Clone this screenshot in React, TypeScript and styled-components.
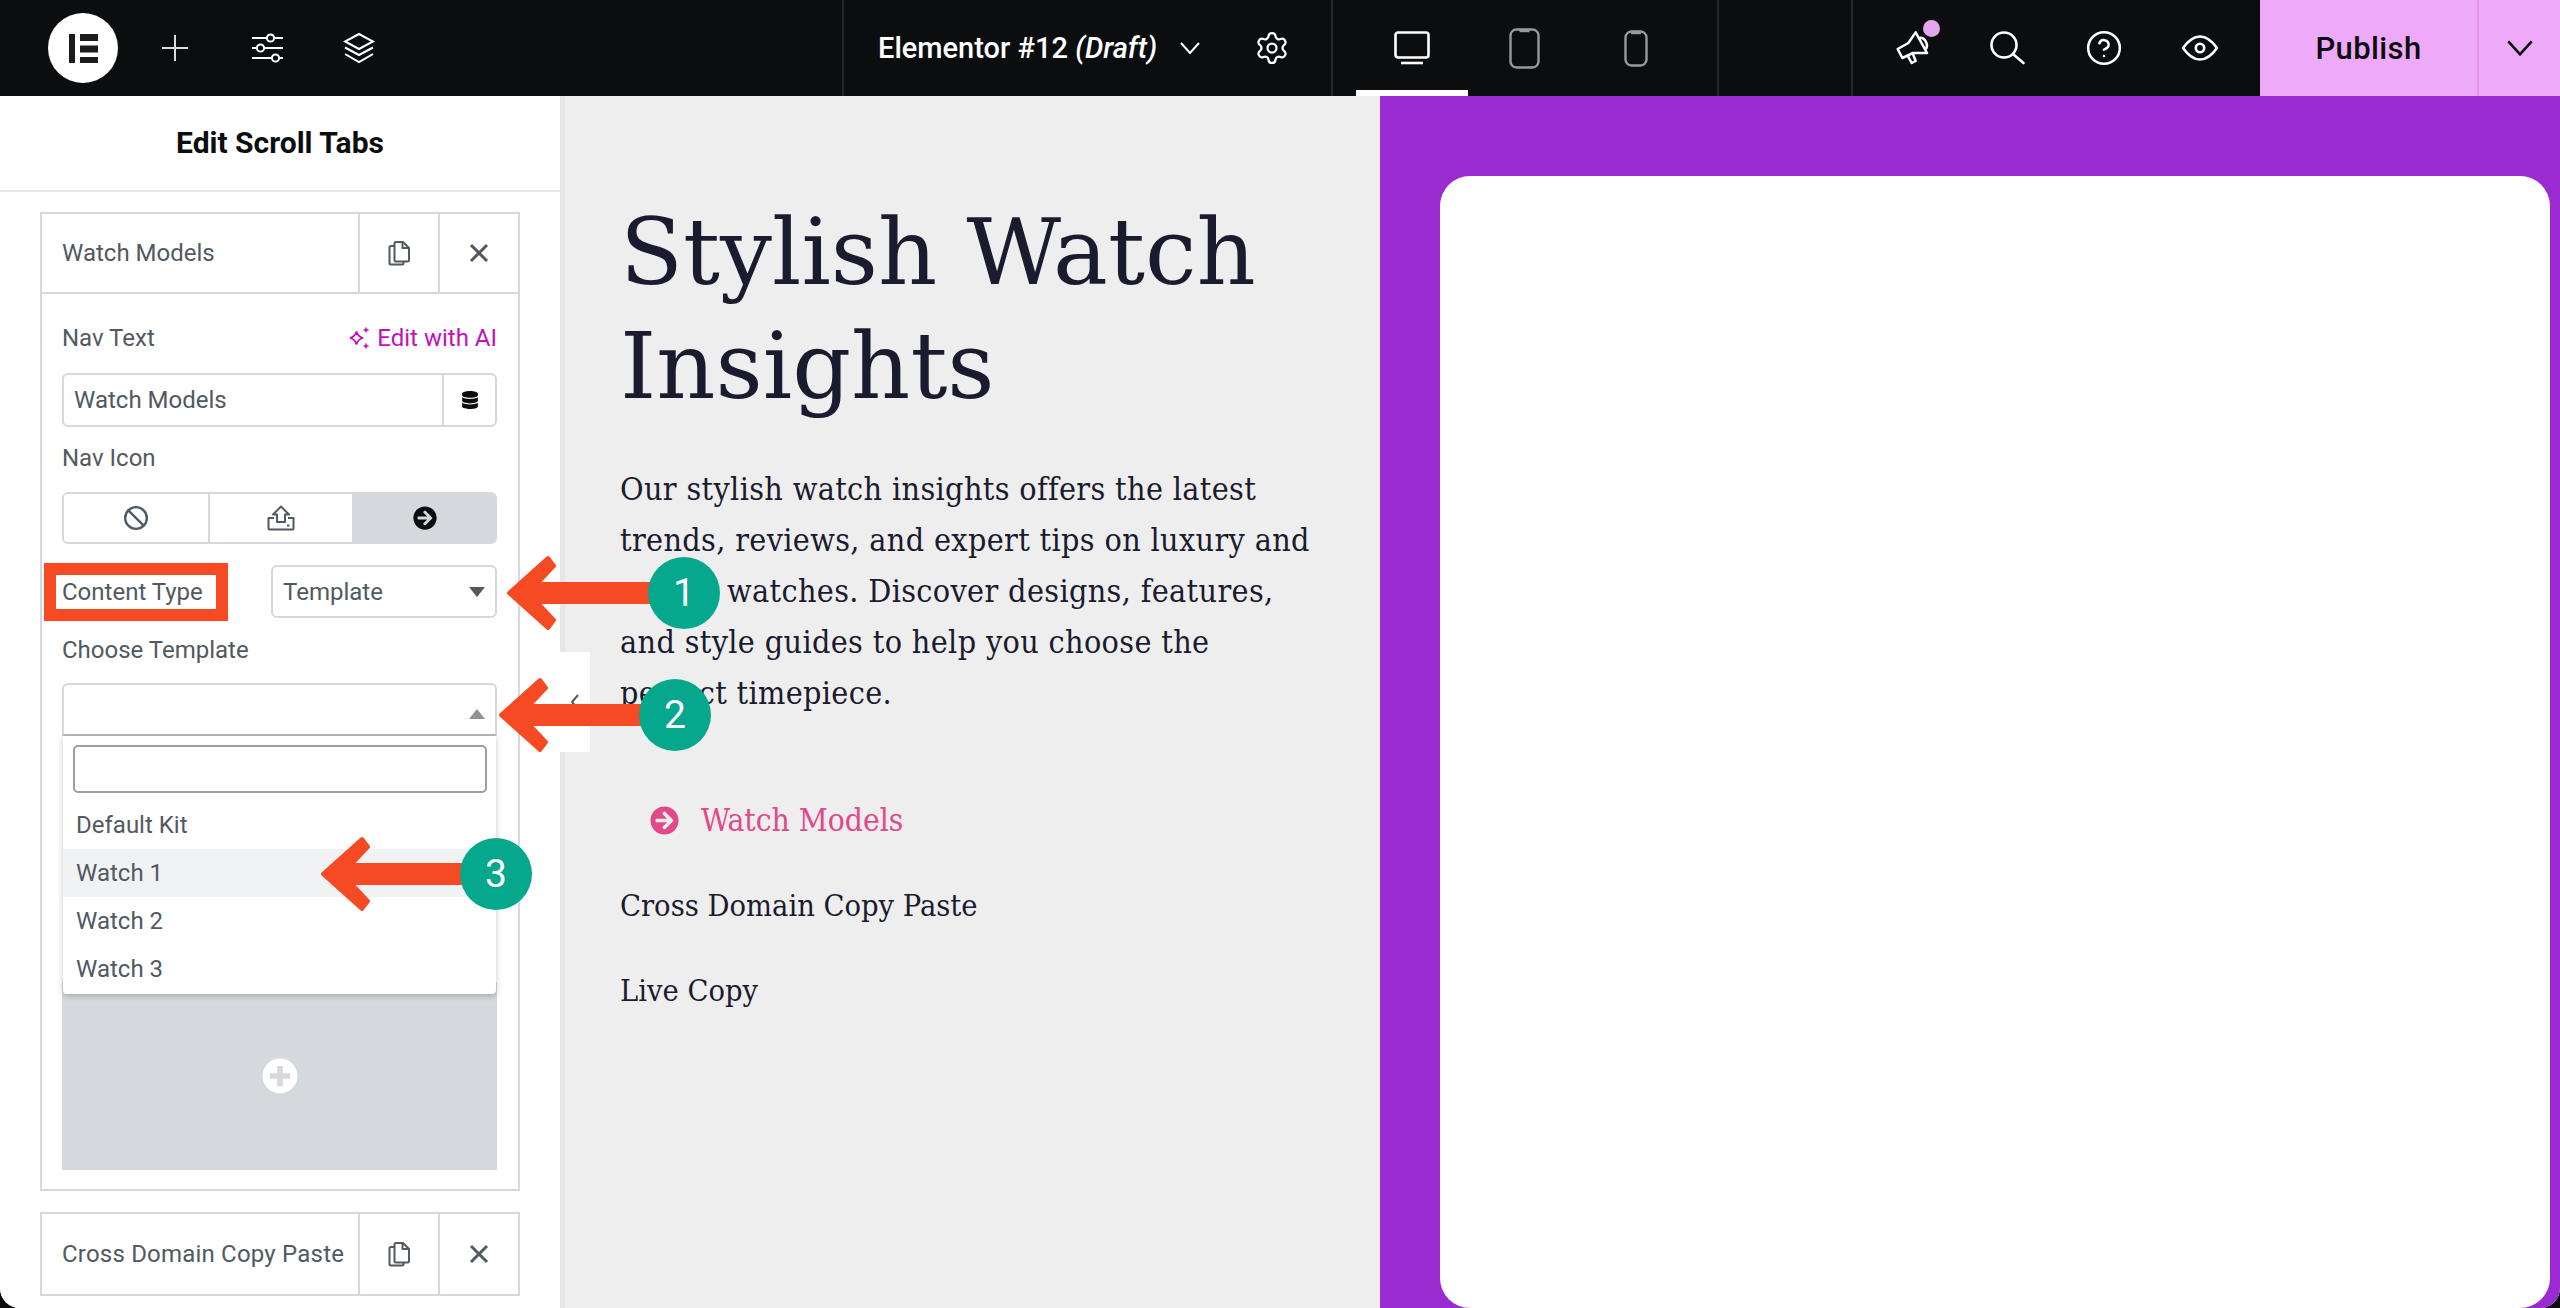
import React from 'react'
import styled, { createGlobalStyle } from 'styled-components'
import { CircleHelp, Settings, Ban } from 'lucide-react'
import { FaArrowCircleRight, FaDatabase, FaPlusCircle } from 'react-icons/fa'

const GlobalStyle = createGlobalStyle`
  html, body {
    margin: 0;
    padding: 0;
    background: #0c0d0f;
  }
  * {
    box-sizing: border-box;
  }
`

const Page = styled.div`
  position: relative;
  width: 2560px;
  height: 1308px;
  display: flex;
  flex-direction: column;
  overflow: hidden;
  background: #0c0d0f;
  font-family: Roboto, 'Liberation Sans', sans-serif;
`

const TopBar = styled.header`
  height: 96px;
  flex: none;
  display: flex;
  color: #fff;
`

const BrandGroup = styled.div`
  width: 842px;
  padding-left: 48px;
  display: flex;
  align-items: center;
`

const Logo = styled.div`
  width: 70px;
  height: 70px;
  margin-right: 11px;
  border-radius: 50%;
  background: #fff;
  display: flex;
  align-items: center;
  justify-content: center;
`

const ToolButton = styled.div<{ $width?: number }>`
  position: relative;
  width: ${(p) => p.$width ?? 92}px;
  height: 96px;
  display: flex;
  align-items: center;
  justify-content: center;
  flex: none;
`

const DocGroup = styled.div`
  width: 489px;
  padding-left: 34px;
  border-left: 2px solid #26272a;
  display: flex;
  align-items: center;
`

const DocTitle = styled.div`
  width: 297px;
  font-size: 29px;
  font-weight: 500;
  color: #fff;
  em {
    font-style: italic;
  }
`

const DocChevron = styled.div`
  width: 30px;
  display: flex;
  justify-content: center;
`

const DocGear = styled.div`
  margin-left: 49px;
  display: flex;
`

const DeviceGroup = styled.div`
  width: 386px;
  padding-left: 23px;
  border-left: 2px solid #26272a;
  display: flex;
`

const DeviceTab = styled.div<{ $active?: boolean }>`
  width: 112px;
  height: 96px;
  display: flex;
  align-items: center;
  justify-content: center;
  border-bottom: 6px solid ${(p) => (p.$active ? '#fff' : 'transparent')};
  padding-top: 6px;
`

const BlankGroup = styled.div`
  width: 134px;
  border-left: 2px solid #26272a;
`

const ActionGroup = styled.div`
  width: 409px;
  padding-left: 12px;
  border-left: 2px solid #26272a;
  display: flex;
`

const NoticeDot = styled.span`
  position: absolute;
  top: 20px;
  right: 21px;
  width: 17px;
  height: 17px;
  border-radius: 50%;
  background: #e6a5ee;
`

const PublishGroup = styled.div`
  width: 300px;
  display: flex;
  background: #efa9f9;
  color: #0c0d0f;
`

const PublishLabel = styled.div`
  width: 219px;
  display: flex;
  align-items: center;
  justify-content: center;
  font-size: 31px;
  font-weight: 500;
  letter-spacing: 0.4px;
  border-right: 2px solid #e293ec;
`

const PublishArrow = styled.div`
  flex: 1;
  display: flex;
  align-items: center;
  justify-content: center;
`

const Workspace = styled.div`
  flex: 1;
  display: flex;
  min-height: 0;
  overflow: hidden;
  border-radius: 0 0 20px 20px;
  background: #eeeeee;
`

const Sidebar = styled.aside`
  position: relative;
  z-index: 1;
  width: 560px;
  flex: none;
  background: #fff;
  box-shadow: 5px 0 0 #e7e7e8;
  display: flex;
  flex-direction: column;
  color: #515962;
  font-size: 24px;
`

const SidebarHeader = styled.div`
  height: 96px;
  flex: none;
  padding-bottom: 2px;
  display: flex;
  align-items: center;
  justify-content: center;
  border-bottom: 2px solid #e7e7e8;
  font-size: 30px;
  font-weight: 700;
  color: #0c0d0f;
`

const SidebarBody = styled.div`
  padding: 20px 40px 0;
  display: flex;
  flex-direction: column;
  gap: 21px;
`

const Repeater = styled.section`
  border: 2px solid #d5d8dc;
  display: flex;
  flex-direction: column;
`

const RepeaterHead = styled.div<{ $open?: boolean }>`
  height: 80px;
  display: flex;
  align-items: stretch;
  border-bottom: ${(p) => (p.$open ? '2px solid #d5d8dc' : 'none')};
`

const RepeaterTitle = styled.div<{ $wide?: boolean }>`
  flex: 1;
  padding-left: 20px;
  display: flex;
  align-items: center;
  white-space: nowrap;
  letter-spacing: ${(p) => (p.$wide ? '0.2px' : '0')};
`

const RepeaterAction = styled.div`
  width: 80px;
  flex: none;
  display: flex;
  align-items: center;
  justify-content: center;
  border-left: 2px solid #d5d8dc;
`

const RepeaterContent = styled.div`
  padding: 29px 21px 19px 20px;
  display: flex;
  flex-direction: column;
`

const LabelRow = styled.div<{ $top: number }>`
  height: 30px;
  margin-top: ${(p) => p.$top}px;
  display: flex;
  align-items: center;
  justify-content: space-between;
`

const AiLink = styled.span`
  display: flex;
  align-items: center;
  gap: 7px;
  color: #c40fbd;
`

const InputGroup = styled.div`
  height: 54px;
  margin-top: 20px;
  display: flex;
  border: 2px solid #d5d8dc;
  border-radius: 6px;
`

const InputValue = styled.div`
  flex: 1;
  padding-left: 10px;
  display: flex;
  align-items: center;
`

const InputAddon = styled.div`
  width: 53px;
  display: flex;
  align-items: center;
  justify-content: center;
  border-left: 2px solid #d5d8dc;
  color: #0c0d0f;
`

const ChoiceGroup = styled.div`
  height: 52px;
  margin-top: 19px;
  display: flex;
  border: 2px solid #d5d8dc;
  border-radius: 6px;
  overflow: hidden;
`

const Choice = styled.div<{ $active?: boolean }>`
  flex: ${(p) => (p.$active ? '1' : '0 0 144px')};
  display: flex;
  align-items: center;
  justify-content: center;
  color: ${(p) => (p.$active ? '#0c0d0f' : '#515962')};
  background: ${(p) => (p.$active ? '#d5d8dc' : '#fff')};
  & + & {
    border-left: 2px solid #d5d8dc;
  }
`

const TypeRow = styled.div`
  height: 53px;
  margin-top: 21px;
  display: flex;
  align-items: center;
  justify-content: space-between;
`

const MarkedLabel = styled.span`
  position: relative;
`

const MarkBox = styled.span`
  position: absolute;
  left: -18px;
  right: -25px;
  top: -15px;
  bottom: -15px;
  border: 12px solid #f54a23;
`

const SelectBox = styled.div<{ $open?: boolean; $width?: number }>`
  position: relative;
  width: ${(p) => (p.$width ? `${p.$width}px` : '100%')};
  height: 53px;
  padding: 0 10px;
  display: flex;
  align-items: center;
  justify-content: space-between;
  border: 2px solid #d5d8dc;
  border-radius: ${(p) => (p.$open ? '6px 6px 0 0' : '6px')};
  border-bottom-color: ${(p) => (p.$open ? '#b5b8bc' : '#d5d8dc')};
`

const Caret = styled.span<{ $up?: boolean }>`
  width: 0;
  height: 0;
  margin-left: auto;
  border-left: 8px solid transparent;
  border-right: 8px solid transparent;
  ${(p) =>
    p.$up
      ? 'border-bottom: 10px solid #8f9297; margin-top: 8px;'
      : 'border-top: 10px solid #55595f;'}
`

const OpenSelectWrap = styled.div`
  position: relative;
  margin-top: 18px;
`

const Dropdown = styled.div`
  position: absolute;
  top: 100%;
  left: 1px;
  right: 1px;
  z-index: 2;
  height: 258px;
  padding: 9px 0 0;
  background: #fff;
  border-radius: 0 0 4px 4px;
  box-shadow: 0 2px 6px rgba(0, 0, 0, 0.22);
`

const DropdownSearch = styled.div`
  height: 48px;
  margin: 0 9px 8px 10px;
  border: 2px solid #9b9ea3;
  border-radius: 5px;
`

const DropdownItem = styled.div<{ $active?: boolean }>`
  height: 48px;
  padding-left: 13px;
  display: flex;
  align-items: center;
  background: ${(p) => (p.$active ? '#f1f2f3' : 'transparent')};
`

const TemplatePreview = styled.div`
  height: 188px;
  margin-top: 246px;
  display: flex;
  align-items: center;
  justify-content: center;
  background: #d5d8dc;
  color: #fff;
`

const CollapseTab = styled.div`
  position: absolute;
  left: 100%;
  top: 556px;
  width: 30px;
  height: 100px;
  display: flex;
  align-items: center;
  justify-content: center;
  background: #fff;
  color: #515962;
`

const Canvas = styled.main`
  flex: 1;
  display: flex;
  min-width: 0;
`

const Article = styled.div`
  width: 820px;
  flex: none;
  padding: 100px 0 0 60px;
  font-family: 'DejaVu Serif Condensed', 'DejaVu Serif', serif;
  color: #1b1b30;
`

const Headline = styled.h1`
  margin: 0;
  font-family: 'DejaVu Serif', serif;
  font-size: 92px;
  line-height: 114px;
  font-weight: 400;
`

const Lead = styled.p`
  margin: 40px 0 0;
  font-size: 32px;
  line-height: 51px;
  letter-spacing: 0.35px;
  white-space: nowrap;
`

const CoveredWord = styled.span`
  display: inline-block;
  width: 107px;
`

const LinkList = styled.div`
  margin-top: 76px;
  display: flex;
  flex-direction: column;
  gap: 34px;
  font-size: 30.5px;
  line-height: 51px;
`

const ActiveLink = styled.div`
  padding-left: 30px;
  display: flex;
  align-items: center;
  gap: 22px;
  font-size: 31.5px;
  color: #e2498a;
`

const PurpleSection = styled.section`
  flex: 1;
  padding: 80px 10px 0 60px;
  display: flex;
  background: #992bd1;
`

const WhiteCard = styled.div`
  flex: 1;
  background: #fff;
  border-radius: 30px;
`

const Callout = styled.div<{ $x: number; $y: number }>`
  position: absolute;
  left: ${(p) => p.$x}px;
  top: ${(p) => p.$y - 38}px;
  z-index: 3;
  height: 76px;
  display: flex;
  align-items: center;
`

const CalloutBadge = styled.span`
  width: 72px;
  height: 72px;
  margin-left: -36px;
  border-radius: 50%;
  background: #05a88c;
  color: #fff;
  font-size: 39px;
  display: flex;
  align-items: center;
  justify-content: center;
`

const ElementorMark = () => (
  <svg width="32" height="32" viewBox="0 0 32 32" fill="#1c1c1e">
    <rect x="2" y="2" width="6" height="29" />
    <rect x="13" y="2" width="18" height="7" />
    <rect x="13" y="13.5" width="18" height="7" />
    <rect x="13" y="25" width="18" height="6" />
  </svg>
)

const PlusIcon = () => (
  <svg width="28" height="28" viewBox="0 0 28 28" stroke="#ddd" strokeWidth="2">
    <path d="M14 1v26M1 14h26" />
  </svg>
)

const SlidersIcon = () => (
  <svg width="32" height="32" viewBox="0 0 32 32" fill="none" stroke="#fff" strokeWidth="2">
    <path d="M1 6h14M24 6h8M1 16h4M14 16h18M1 26h19M28 26h4" />
    <circle cx="19.5" cy="6" r="3.6" />
    <circle cx="9.5" cy="16" r="3.6" />
    <circle cx="24.5" cy="26" r="3.6" />
  </svg>
)

const LayersIcon = () => (
  <svg width="32" height="32" viewBox="0 0 32 32" fill="none" stroke="#fff" strokeWidth="2">
    <path d="M16 2 30 9.5 16 17 2 9.5Z" />
    <path d="M2 15.5l14 7.5 14-7.5M2 22l14 8 14-8" />
  </svg>
)

const ChevronIcon = ({ size = 20, color = '#fff' }: { size?: number; color?: string }) => (
  <svg width={size} height={size * 0.6} viewBox="0 0 20 12" fill="none" stroke={color} strokeWidth="2">
    <path d="M1 1l9 10 9-10" />
  </svg>
)

const DesktopIcon = () => (
  <svg width="38" height="34" viewBox="0 0 38 34" fill="none" stroke="#fff" strokeWidth="2.6">
    <rect x="2.5" y="1.5" width="33" height="25" rx="2.5" />
    <path d="M8 32h22" />
  </svg>
)

const PhoneIcon = ({ width, height }: { width: number; height: number }) => (
  <svg width={width} height={height} viewBox={`0 0 ${width} ${height}`} fill="none" stroke="#9a9a9a" strokeWidth="2.4">
    <rect x="1.5" y="1.5" width={width - 3} height={height - 3} rx="6" />
    <path d={`M${width / 2 - 5} 2.5h10`} strokeWidth="3.4" />
  </svg>
)

const MegaphoneIcon = () => (
  <svg width="40" height="40" viewBox="40 55 120 120" fill="none" stroke="#fff" strokeWidth="7.5" strokeLinejoin="round" strokeLinecap="round">
    <path d="M54 118 86 100 108 68 142 130 100 130 68 145Z" />
    <path d="M122 84C136 84 146 104 140 116" />
    <path d="M84 138 96 160 108 154 100 134" />
  </svg>
)

const SearchIcon = () => (
  <svg width="40" height="40" viewBox="0 0 40 40" fill="none" stroke="#fff" strokeWidth="2.6" strokeLinecap="round">
    <circle cx="15" cy="17" r="12.5" />
    <path d="M24.5 26.5 34.5 35" />
  </svg>
)

const EyeIcon = () => (
  <svg width="40" height="40" viewBox="0 0 40 40" fill="none" stroke="#fff" strokeWidth="2.6" strokeLinejoin="round">
    <path d="M3 20C9 11.500 14 8.500 20 8.500S31 11.500 37 20C31 28.500 26 31.500 20 31.500S9 28.500 3 20Z" />
    <circle cx="20" cy="20" r="4.200" />
  </svg>
)

const CopyIcon = () => (
  <svg width="22" height="26" viewBox="0 0 22 26" fill="none" stroke="#515962" strokeWidth="2" strokeLinejoin="round">
    <path d="M8 2h7l6 6v12c0 1-.6 1.500-1.500 1.500H8c-1 0-1.500-.6-1.500-1.500V3.500C6.500 2.600 7 2 8 2Z" />
    <path d="M14.500 2v6H21" />
    <path d="M6.500 6H3C2 6 1.500 6.600 1.500 7.500v15.500C1.500 24 2 24.500 3 24.500h11c1 0 1.500-.5 1.500-1.500V21.500" />
  </svg>
)

const CloseIcon = () => (
  <svg width="20" height="20" viewBox="0 0 20 20" fill="none" stroke="#515962" strokeWidth="3">
    <path d="M2 2l16 16M18 2 2 18" />
  </svg>
)

const SparkleIcon = () => (
  <svg width="22" height="24" viewBox="0 0 22 24" fill="none" stroke="#c40fbd" strokeWidth="1.800">
    <path d="M8.500 5.500c1 4 2.500 5.500 6.500 6.500-4 1-5.500 2.500-6.500 6.500-1-4-2.500-5.500-6.500-6.500 4-1 5.500-2.500 6.500-6.500Z" />
    <path d="M18 1.500v5M15.500 4h5M18 17.500v5M15.500 20h5" strokeWidth="1.600" />
  </svg>
)

const UploadIcon = () => (
  <svg width="28" height="26" viewBox="0 0 28 26" fill="none" stroke="#515962" strokeWidth="2" strokeLinejoin="round">
    <path d="M14 1.500 22 9.500H18V17H10V9.500H6Z" />
    <path d="M7 13H1.500v10.500c0 .6.400 1 1 1h23c.6 0 1-.4 1-1V13H21" />
    <path d="M20 20.500h2.500" />
  </svg>
)

const SmallChevronLeft = () => (
  <svg width="10" height="18" viewBox="0 0 10 18" fill="none" stroke="#515962" strokeWidth="2">
    <path d="M8 2 2 9l6 7" />
  </svg>
)

const CalloutArrow = ({ length }: { length: number }) => (
  <svg width={length} height="76" viewBox={`0 0 ${length} 76`} fill="#f54a23" stroke="#f54a23" strokeWidth="4" strokeLinejoin="round">
    <path d={`M3 38 42 3 48 11 31 29H${length}V47H31L48 65 42 73Z`} />
  </svg>
)

const App = () => {
  return (
    <Page>
      <GlobalStyle />
      <TopBar>
        <BrandGroup>
          <Logo>
            <ElementorMark />
          </Logo>
          <ToolButton>
            <PlusIcon />
          </ToolButton>
          <ToolButton>
            <SlidersIcon />
          </ToolButton>
          <ToolButton>
            <LayersIcon />
          </ToolButton>
        </BrandGroup>
        <DocGroup>
          <DocTitle>
            Elementor #12 <em>(Draft)</em>
          </DocTitle>
          <DocChevron>
            <ChevronIcon />
          </DocChevron>
          <DocGear>
            <Settings size={36} strokeWidth={1.5} color="#fff" />
          </DocGear>
        </DocGroup>
        <DeviceGroup>
          <DeviceTab $active>
            <DesktopIcon />
          </DeviceTab>
          <DeviceTab>
            <PhoneIcon width={31} height={41} />
          </DeviceTab>
          <DeviceTab>
            <PhoneIcon width={24} height={37} />
          </DeviceTab>
        </DeviceGroup>
        <BlankGroup />
        <ActionGroup>
          <ToolButton $width={96}>
            <MegaphoneIcon />
            <NoticeDot />
          </ToolButton>
          <ToolButton $width={95}>
            <SearchIcon />
          </ToolButton>
          <ToolButton $width={96}>
            <CircleHelp size={38} strokeWidth={1.6} color="#fff" />
          </ToolButton>
          <ToolButton $width={96}>
            <EyeIcon />
          </ToolButton>
        </ActionGroup>
        <PublishGroup>
          <PublishLabel>Publish</PublishLabel>
          <PublishArrow>
            <ChevronIcon size={26} color="#0c0d0f" />
          </PublishArrow>
        </PublishGroup>
      </TopBar>
      <Workspace>
        <Sidebar>
          <SidebarHeader>Edit Scroll Tabs</SidebarHeader>
          <SidebarBody>
            <Repeater>
              <RepeaterHead $open>
                <RepeaterTitle>Watch Models</RepeaterTitle>
                <RepeaterAction>
                  <CopyIcon />
                </RepeaterAction>
                <RepeaterAction>
                  <CloseIcon />
                </RepeaterAction>
              </RepeaterHead>
              <RepeaterContent>
                <LabelRow $top={0}>
                  <span>Nav Text</span>
                  <AiLink>
                    <SparkleIcon />
                    Edit with AI
                  </AiLink>
                </LabelRow>
                <InputGroup>
                  <InputValue>Watch Models</InputValue>
                  <InputAddon>
                    <FaDatabase size={18} />
                  </InputAddon>
                </InputGroup>
                <LabelRow $top={16}>Nav Icon</LabelRow>
                <ChoiceGroup>
                  <Choice>
                    <Ban size={26} strokeWidth={2.2} />
                  </Choice>
                  <Choice>
                    <UploadIcon />
                  </Choice>
                  <Choice $active>
                    <FaArrowCircleRight size={24} />
                  </Choice>
                </ChoiceGroup>
                <TypeRow>
                  <MarkedLabel>
                    Content Type
                    <MarkBox />
                  </MarkedLabel>
                  <SelectBox $width={226}>
                    Template
                    <Caret />
                  </SelectBox>
                </TypeRow>
                <LabelRow $top={17}>Choose Template</LabelRow>
                <OpenSelectWrap>
                  <SelectBox $open>
                    <Caret $up />
                  </SelectBox>
                  <Dropdown>
                    <DropdownSearch />
                    <DropdownItem>Default Kit</DropdownItem>
                    <DropdownItem $active>Watch 1</DropdownItem>
                    <DropdownItem>Watch 2</DropdownItem>
                    <DropdownItem>Watch 3</DropdownItem>
                  </Dropdown>
                </OpenSelectWrap>
                <TemplatePreview>
                  <FaPlusCircle size={36} />
                </TemplatePreview>
              </RepeaterContent>
            </Repeater>
            <Repeater>
              <RepeaterHead>
                <RepeaterTitle $wide>Cross Domain Copy Paste</RepeaterTitle>
                <RepeaterAction>
                  <CopyIcon />
                </RepeaterAction>
                <RepeaterAction>
                  <CloseIcon />
                </RepeaterAction>
              </RepeaterHead>
            </Repeater>
          </SidebarBody>
          <CollapseTab>
            <SmallChevronLeft />
          </CollapseTab>
        </Sidebar>
        <Canvas>
          <Article>
            <Headline>
              Stylish Watch
              <br />
              Insights
            </Headline>
            <Lead>
              Our stylish watch insights offers the latest
              <br />
              trends, reviews, and expert tips on luxury and
              <br />
              <CoveredWord />
              watches. Discover designs, features,
              <br />
              and style guides to help you choose the
              <br />
              perfect timepiece.
            </Lead>
            <LinkList>
              <ActiveLink>
                <FaArrowCircleRight size={29} />
                Watch Models
              </ActiveLink>
              <div>Cross Domain Copy Paste</div>
              <div>Live Copy</div>
            </LinkList>
          </Article>
          <PurpleSection>
            <WhiteCard />
          </PurpleSection>
        </Canvas>
      </Workspace>
      <Callout $x={506} $y={593}>
        <CalloutArrow length={178} />
        <CalloutBadge>1</CalloutBadge>
      </Callout>
      <Callout $x={498} $y={715}>
        <CalloutArrow length={177} />
        <CalloutBadge>2</CalloutBadge>
      </Callout>
      <Callout $x={320} $y={874}>
        <CalloutArrow length={176} />
        <CalloutBadge>3</CalloutBadge>
      </Callout>
    </Page>
  )
}

export default App
